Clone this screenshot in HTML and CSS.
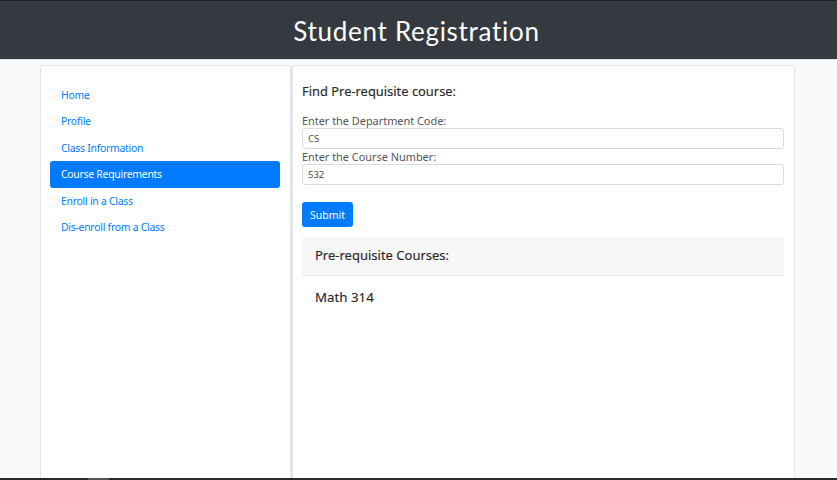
FILE: index.html
```html
<!DOCTYPE html>
<html lang="en">
<head>
<meta charset="utf-8">
<title>Student Registration</title>
<link rel="stylesheet" href="styles.css">
</head>
<body>
<header class="topbar">
  <h1 class="title">Student Registration</h1>
</header>
<div class="page">
  <nav class="sidebar">
    <ul class="nav">
      <li><a class="nav-link" href="#">Home</a></li>
      <li><a class="nav-link" href="#">Profile</a></li>
      <li><a class="nav-link" href="#">Class Information</a></li>
      <li><a class="nav-link active" href="#">Course Requirements</a></li>
      <li><a class="nav-link" href="#">Enroll in a Class</a></li>
      <li><a class="nav-link" href="#">Dis-enroll from a Class</a></li>
    </ul>
  </nav>
  <main class="content">
    <h2 class="form-title">Find Pre-requisite course:</h2>
    <form class="form">
      <label class="label" for="dept">Enter the Department Code:</label>
      <input class="input" id="dept" type="text" value="CS">
      <label class="label" for="num">Enter the Course Number:</label>
      <input class="input" id="num" type="text" value="532">
      <button class="btn" type="button">Submit</button>
    </form>
    <section class="card">
      <div class="card-header">Pre-requisite Courses:</div>
      <div class="card-body">Math 314</div>
    </section>
  </main>
</div>
<div class="bottombar"><span class="bottom-seg"></span></div>
</body>
</html>
```
FILE: styles.css
```css
* { box-sizing: border-box; }
html, body { height: 100%; }
body {
  margin: 0;
  background: #f8f9fa;
  font-family: "Noto Sans", "Open Sans", sans-serif;
  color: #212529;
  display: flex;
  flex-direction: column;
  overflow: hidden;
}
.topbar {
  height: 60px;
  background: #343a40;
  border-top: 1px solid #1f2226;
  border-bottom: 1px solid #dfe2e5;
  display: flex;
  align-items: center;
  justify-content: center;
  flex: none;
}
.title {
  margin: 0;
  color: #fff;
  font-family: "Lato", sans-serif;
  font-weight: 400;
  font-size: 26px;
  letter-spacing: 0.7px;
  padding-top: 2px;
  padding-right: 4px;
}
.page {
  flex: 1;
  display: flex;
  width: 755px;
  margin: 5px auto 0 40px;
  min-height: 0;
}
.sidebar {
  width: 251px;
  background: #fff;
  border: 1px solid #e3e6e9;
  border-bottom: none;
  border-radius: 4px 4px 0 0;
  padding: 16px 10px 0 9px;
}
.nav {
  list-style: none;
  margin: 0;
  padding: 0;
}
.nav-link {
  display: block;
  height: 26.4px;
  line-height: 26.4px;
  padding: 0 11px;
  font-size: 10.4px;
  letter-spacing: -0.25px;
  color: #007bff;
  text-decoration: none;
  border-radius: 3px;
}
.nav-link.active {
  background: #007bff;
  color: #fff;
}
.content {
  flex: 1;
  background: #fff;
  border: 1px solid #e3e6e9;
  border-left: 2px solid #e6e6e6;
  border-bottom: none;
  border-radius: 4px 4px 0 0;
  padding: 15px 10px 0 9px;
}
.form-title {
  margin: 0 0 13px 0;
  font-size: 12.9px;
  font-weight: 400;
  color: #2a2a2a;
  -webkit-text-stroke: 0.15px #2a2a2a;
  line-height: 20px;
}
.form {
  display: flex;
  flex-direction: column;
  align-items: flex-start;
}
.label {
  font-size: 10.9px;
  color: #555;
  line-height: 14px;
  margin-bottom: 0;
}
.input {
  width: 100%;
  height: 21px;
  border: 1px solid #d9dcdf;
  border-radius: 3px;
  padding: 0 5px;
  font-family: inherit;
  font-size: 9.5px;
  color: #495057;
  margin-bottom: 1px;
  background: #fff;
}
.btn {
  margin-top: 16px;
  width: 51px;
  height: 25px;
  border: none;
  border-radius: 3px;
  background: #007bff;
  color: #fff;
  font-family: inherit;
  font-size: 10.5px;
  padding: 0;
}
.card {
  margin-top: 10px;
}
.card-header {
  background: #f7f7f7;
  border-bottom: 1px solid #e3e3e3;
  height: 39px;
  padding: 0 13px;
  line-height: 36px;
  font-size: 13px;
  font-weight: 400;
  color: #2a2a2a;
  -webkit-text-stroke: 0.15px #2a2a2a;
}
.card-body {
  padding: 11px 13px;
  font-size: 13.3px;
  font-weight: 400;
  color: #2a2a2a;
  -webkit-text-stroke: 0.15px #2a2a2a;
  line-height: 20px;
}
.bottombar {
  flex: none;
  height: 2px;
  background: #2a2a2a;
  display: flex;
}
.bottom-seg {
  width: 21px;
  margin-left: 88px;
  background: #555;
}
```
